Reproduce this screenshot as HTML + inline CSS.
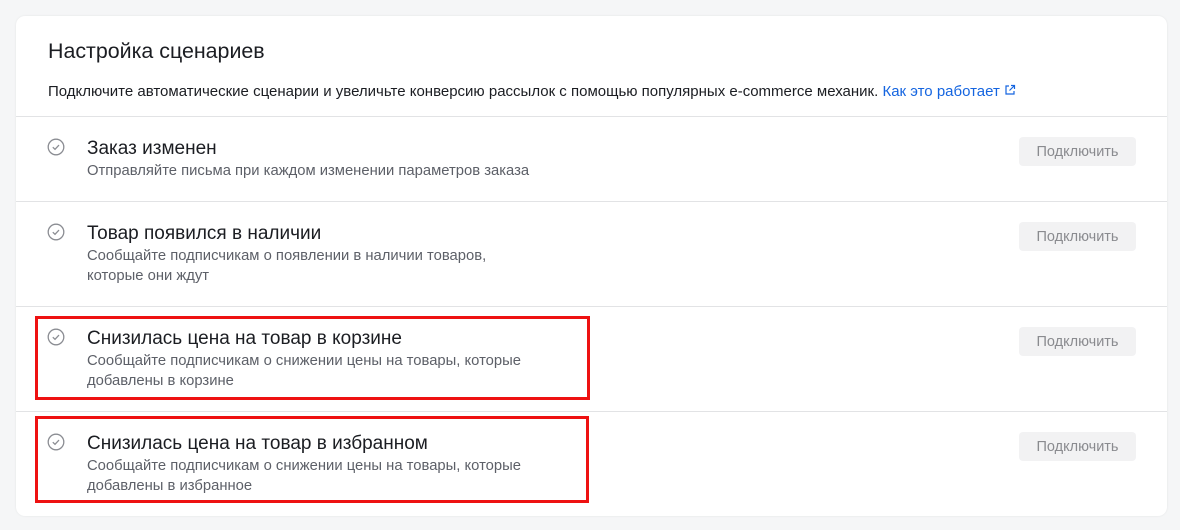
<!DOCTYPE html>
<html><head><meta charset="utf-8"><style>
*{box-sizing:border-box;margin:0;padding:0}
body{width:1180px;height:530px;background:#f5f6f7;font-family:"Liberation Sans",sans-serif;position:relative;overflow:hidden;color:#1b1d22}
.card{position:absolute;left:16px;top:16px;width:1151px;height:500px;background:#fff;border-radius:9px;box-shadow:0 0 2px rgba(0,0,0,.08)}
.h{position:absolute;left:32px;top:23px;font-size:21.4px;color:#1b1d22}
.d{position:absolute;left:32px;top:67px;font-size:15px;color:#1b1d22;white-space:nowrap}
.d a{color:#1565e0;text-decoration:none}
.row{position:absolute;left:0;width:1151px;border-top:1px solid #e2e3e5}
.t{position:absolute;left:71px;font-size:19px;color:#1b1d22;white-space:nowrap}
.s{position:absolute;left:71px;font-size:14.8px;color:#5d6068;line-height:20px;white-space:nowrap}
.ic{position:absolute;left:31px}
.btn{position:absolute;left:1003px;width:117px;height:29px;background:#f2f2f3;border-radius:4px;color:#8a8b8f;font-size:14.5px;text-align:center;line-height:31px}
.red{position:absolute;border:3px solid #ee1111}
</style></head><body>
<div class="card">
<div class="h">Настройка сценариев</div>
<div class="d">Подключите автоматические сценарии и увеличьте конверсию рассылок с помощью популярных e-commerce механик. <a>Как это работает <svg width="12" height="12" viewBox="0 0 12 12" style="vertical-align:0px"><path d="M5 2H2v8h8V7M7 1.5h3.5V5M10.5 1.5L5.5 6.5" fill="none" stroke="#1565e0" stroke-width="1.2"/></svg></a></div>

<div class="row" style="top:100px;height:85px">
<svg class="ic" style="top:21px" width="18" height="18" viewBox="0 0 18 18"><circle cx="9" cy="9" r="7.8" fill="none" stroke="#8b8d93" stroke-width="1.3"/><path d="M5.8 9.2l2.2 2.1 4-4.2" fill="none" stroke="#8b8d93" stroke-width="1.3"/></svg>
<div class="t" style="top:21px">Заказ изменен</div>
<div class="s" style="top:44px">Отправляйте письма при каждом изменении параметров заказа</div>
<div class="btn" style="top:20px">Подключить</div>
</div>
<div class="row" style="top:185px;height:105px">
<svg class="ic" style="top:21px" width="18" height="18" viewBox="0 0 18 18"><circle cx="9" cy="9" r="7.8" fill="none" stroke="#8b8d93" stroke-width="1.3"/><path d="M5.8 9.2l2.2 2.1 4-4.2" fill="none" stroke="#8b8d93" stroke-width="1.3"/></svg>
<div class="t" style="top:21px">Товар появился в наличии</div>
<div class="s" style="top:44px">Сообщайте подписчикам о появлении в наличии товаров,<br>которые они ждут</div>
<div class="btn" style="top:20px">Подключить</div>
</div>
<div class="row" style="top:290px;height:105px">
<svg class="ic" style="top:21px" width="18" height="18" viewBox="0 0 18 18"><circle cx="9" cy="9" r="7.8" fill="none" stroke="#8b8d93" stroke-width="1.3"/><path d="M5.8 9.2l2.2 2.1 4-4.2" fill="none" stroke="#8b8d93" stroke-width="1.3"/></svg>
<div class="t" style="top:21px">Снизилась цена на товар в корзине</div>
<div class="s" style="top:44px">Сообщайте подписчикам о снижении цены на товары, которые<br>добавлены в корзине</div>
<div class="btn" style="top:20px">Подключить</div>
</div>
<div class="row" style="top:395px;height:105px">
<svg class="ic" style="top:21px" width="18" height="18" viewBox="0 0 18 18"><circle cx="9" cy="9" r="7.8" fill="none" stroke="#8b8d93" stroke-width="1.3"/><path d="M5.8 9.2l2.2 2.1 4-4.2" fill="none" stroke="#8b8d93" stroke-width="1.3"/></svg>
<div class="t" style="top:21px">Снизилась цена на товар в избранном</div>
<div class="s" style="top:44px">Сообщайте подписчикам о снижении цены на товары, которые<br>добавлены в избранное</div>
<div class="btn" style="top:20px">Подключить</div>
</div>
</div>
<div class="red" style="left:35px;top:316px;width:555px;height:84px"></div>
<div class="red" style="left:35px;top:416px;width:554px;height:87px"></div>
</body></html>
